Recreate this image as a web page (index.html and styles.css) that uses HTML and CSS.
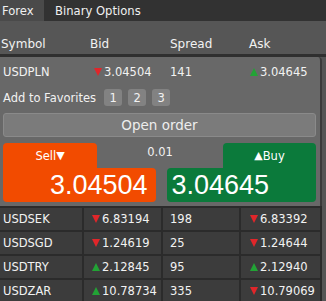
FILE: index.html
```html
<!DOCTYPE html>
<html>
<head>
<meta charset="utf-8">
<link rel="stylesheet" href="styles.css">
</head>
<body>
<div class="app">
  <div class="tabs">
    <div class="tab active">Forex</div>
    <div class="tab">Binary Options</div>
  </div>
  <div class="head grid">
    <div class="c sym">Symbol</div>
    <div class="c bid">Bid</div>
    <div class="c spr">Spread</div>
    <div class="c ask">Ask</div>
  </div>
  <div class="sep"></div>
  <div class="panel">
    <div class="prow grid">
      <div class="c sym">USDPLN</div>
      <div class="c bid"><span class="dn"></span>3.04504</div>
      <div class="c spr">141</div>
      <div class="c ask"><span class="up"></span>3.04645</div>
    </div>
    <div class="fav">
      <span class="fav-label">Add to Favorites</span>
      <span class="fbtn">1</span>
      <span class="fbtn">2</span>
      <span class="fbtn">3</span>
    </div>
    <div class="open">Open order</div>
    <div class="trade">
      <div class="trade-top">
        <div class="stab">Sell<span class="tri">▼</span></div>
        <div class="lot">0.01</div>
        <div class="btab"><span class="tri">▲</span>Buy</div>
      </div>
      <div class="trade-bot">
        <div class="sbody">3.04504</div>
        <div class="bbody">3.04645</div>
      </div>
    </div>
  </div>
  <div class="rows">
    <div class="row grid">
      <div class="c sym">USDSEK</div>
      <div class="c bid"><span class="dn"></span>6.83194</div>
      <div class="c spr">198</div>
      <div class="c ask"><span class="dn"></span>6.83392</div>
    </div>
    <div class="row grid">
      <div class="c sym">USDSGD</div>
      <div class="c bid"><span class="dn"></span>1.24619</div>
      <div class="c spr">25</div>
      <div class="c ask"><span class="dn"></span>1.24644</div>
    </div>
    <div class="row grid">
      <div class="c sym">USDTRY</div>
      <div class="c bid"><span class="up"></span>2.12845</div>
      <div class="c spr">95</div>
      <div class="c ask"><span class="up"></span>2.12940</div>
    </div>
    <div class="row grid">
      <div class="c sym">USDZAR</div>
      <div class="c bid"><span class="up"></span>10.78734</div>
      <div class="c spr">335</div>
      <div class="c ask"><span class="dn"></span>10.79069</div>
    </div>
  </div>
</div>
</body>
</html>
```
FILE: styles.css
```css
* { box-sizing: border-box; }
html, body { margin: 0; padding: 0; }
body {
  background: #555555;
  font-family: "DejaVu Sans", Verdana, sans-serif;
  font-size: 11.5px;
  color: #f2f2f2;
  width: 326px;
  height: 301px;
  overflow: hidden;
}
.app { width: 326px; }
.tabs {
  display: flex;
  height: 21px;
  background: #323232;
  font-size: 11.6px;
}
.tab {
  padding: 0 0 0 2px;
  line-height: 22px;
  color: #f0f0f0;
}
.tab.active {
  width: 44px;
  background: #4a4a4a;
}
.tab + .tab { padding-left: 11px; }

.grid {
  display: grid;
  grid-template-columns: 82px 79px 78px 1fr;
  align-items: center;
}
.c { white-space: nowrap; display: flex; align-items: center; }
.head {
  height: 33px;
  background: #565656;
  padding-top: 12px;
  font-size: 12px;
}
.head .sym { padding-left: 1px; }
.head .bid { padding-left: 8px; }
.head .spr { padding-left: 9px; }
.head .ask { padding-left: 10px; }
.sep { height: 3px; background: #2f2f2f; }

.panel {
  width: 322px;
  background: #686868;
  border-right: 2px solid #3a3a3a;
  border-top-right-radius: 4px;
  padding: 0 4px 4px 3px;
}
.prow { height: 30px; margin-left: -3px; margin-right: -4px; }
.sym { padding-left: 3px; }
.bid { padding-left: 12px; }
.spr { padding-left: 9px; }
.ask { padding-left: 11px; }
.dn, .up {
  display: inline-block;
  width: 0; height: 0;
  border-left: 4px solid transparent;
  border-right: 4px solid transparent;
  margin-right: 2px;
}
.dn { border-top: 8px solid #e0262a; }
.up { border-bottom: 8px solid #22a335; }

.fav {
  height: 21px;
  display: flex;
  align-items: center;
}
.fav-label { margin-right: 8px; }
.fbtn {
  width: 18px;
  height: 17px;
  margin-right: 6px;
  background: #828282;
  border-radius: 3px;
  display: flex;
  align-items: center;
  justify-content: center;
}
.open {
  margin-top: 5px;
  height: 24px;
  background: #7b7b7b;
  border: 1px solid #8a8a8a;
  border-radius: 3px;
  font-size: 13.5px;
  display: flex;
  align-items: center;
  justify-content: center;
  color: #ededed;
}
.trade { margin-top: 6px; }
.trade-top {
  display: flex;
  height: 25px;
}
.stab, .btab {
  width: 94px;
  display: flex;
  align-items: center;
  justify-content: center;
  color: #fff;
  font-size: 11.5px;
}
.stab { background: #f24b00; border-radius: 4px 4px 0 0; }
.btab { background: #0b7a3b; border-radius: 4px 4px 0 0; width: 93px; }
.tri { font-size: 11px; }
.lot {
  flex: 1;
  text-align: center;
  padding-top: 2px;
}
.trade-bot {
  display: flex;
  height: 34px;
  gap: 11px;
}
.sbody, .bbody {
  flex: 1;
  display: flex;
  align-items: center;
  font-family: "Liberation Sans", Arial, sans-serif;
  font-size: 27px;
  color: #fff;
}
.sbody {
  background: #f24b00;
  border-radius: 0 4px 4px 4px;
  justify-content: flex-end;
  padding-right: 8px;
}
.bbody {
  background: #0b7a3b;
  border-radius: 4px 0 4px 4px;
  padding-left: 5px;
}

.rows { width: 322px; }
.row {
  height: 24px;
  background: #3c3c3c;
  border-top: 2px solid #2b2b2b;
  border-right: 2px solid #2b2b2b;
}
.row .c { height: 100%; }
.row .bid, .row .spr, .row .ask { border-left: 2px solid #2b2b2b; }
.row .bid { padding-left: 8px; }
.row .spr { padding-left: 7px; }
.row .ask { padding-left: 9px; }
```
